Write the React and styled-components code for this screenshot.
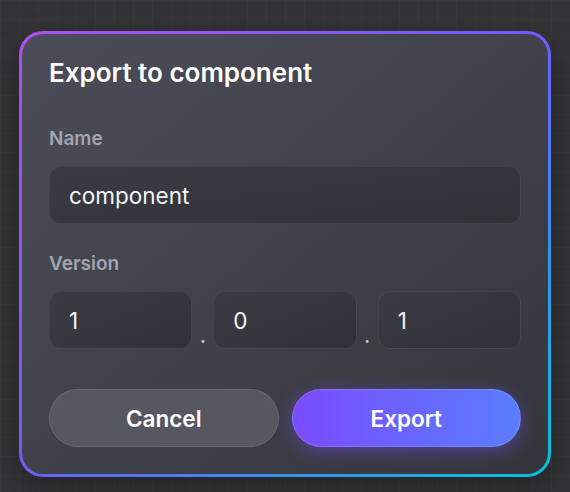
import React from 'react';
import styled, { createGlobalStyle } from 'styled-components';

const GlobalStyle = createGlobalStyle`
    html, body {
        margin: 0;
        padding: 0;
        background-color: #333335;
    }

    * {
        box-sizing: border-box;
    }
`;

const Page = styled.div`
    width: 570px;
    height: 492px;
    padding: 31px 19px 15px;
    font-family: Inter, "Noto Sans", sans-serif;
    background-color: #333335;
    background-image:
        linear-gradient(rgba(255, 255, 255, 0.02) 1px, transparent 1px),
        linear-gradient(90deg, rgba(255, 255, 255, 0.02) 1px, transparent 1px);
    background-size: 19px 19px;
`;

const Card = styled.div`
    width: 532px;
    height: 446px;
    border: 3px solid transparent;
    border-radius: 24px;
    padding: 24px 27px 27px;
    background:
        linear-gradient(to bottom right, #4b4e59, #34363c) padding-box,
        linear-gradient(to bottom right, #b24ef6, #6c5dfd 50%, #05c3dc) border-box;
    box-shadow: 0 10px 30px rgba(0, 0, 0, 0.3);
    display: flex;
    flex-direction: column;
`;

const Title = styled.h2`
    margin: 0 0 40px;
    font-size: 26px;
    line-height: 30px;
    font-weight: 600;
    color: #ffffff;
`;

const Label = styled.div`
    font-size: 19px;
    line-height: 22px;
    font-weight: 600;
    color: #a3a5ad;
    margin-bottom: 16px;
`;

const Field = styled.div`
    margin-bottom: ${props => props.$gap || 0}px;
`;

const Input = styled.div`
    height: 58px;
    flex: 1;
    border-radius: 12px;
    border: 1px solid rgba(255, 255, 255, 0.07);
    background: linear-gradient(to bottom right, #3a3c44, #313238);
    color: #f4f4f6;
    font-size: 22.5px;
    padding: 0 19px;
    display: flex;
    align-items: center;
`;

const VersionRow = styled.div`
    display: flex;
    align-items: flex-end;
`;

const Dot = styled.span`
    width: 21px;
    text-align: center;
    color: #c8cad0;
    font-size: 22px;
    line-height: 20px;
    padding-bottom: 4px;
`;

const Actions = styled.div`
    display: grid;
    grid-template-columns: 1fr 1fr;
    gap: 13px;
    margin-top: auto;
`;

const Button = styled.button`
    height: 58px;
    border-radius: 29px;
    font-family: Inter, "Noto Sans", sans-serif;
    font-size: 22.5px;
    font-weight: 600;
    color: #ffffff;
    cursor: pointer;
    border: 1px solid ${props => props.$primary ? 'rgba(255, 255, 255, 0.15)' : 'rgba(255, 255, 255, 0.1)'};
    background: ${props => props.$primary
        ? 'linear-gradient(90deg, #7a4cff, #5a7dff)'
        : '#565861'};
    box-shadow: ${props => props.$primary ? '0 4px 18px rgba(122, 76, 255, 0.45)' : 'none'};
`;

const App = () => {
    return (
        <Page>
            <GlobalStyle />
            <Card>
                <Title>Export to component</Title>

                <Field $gap={29}>
                    <Label>Name</Label>
                    <Input>component</Input>
                </Field>

                <Field>
                    <Label>Version</Label>
                    <VersionRow>
                        <Input>1</Input>
                        <Dot>.</Dot>
                        <Input>0</Input>
                        <Dot>.</Dot>
                        <Input>1</Input>
                    </VersionRow>
                </Field>

                <Actions>
                    <Button>Cancel</Button>
                    <Button $primary>Export</Button>
                </Actions>
            </Card>
        </Page>
    )
}

export default App
